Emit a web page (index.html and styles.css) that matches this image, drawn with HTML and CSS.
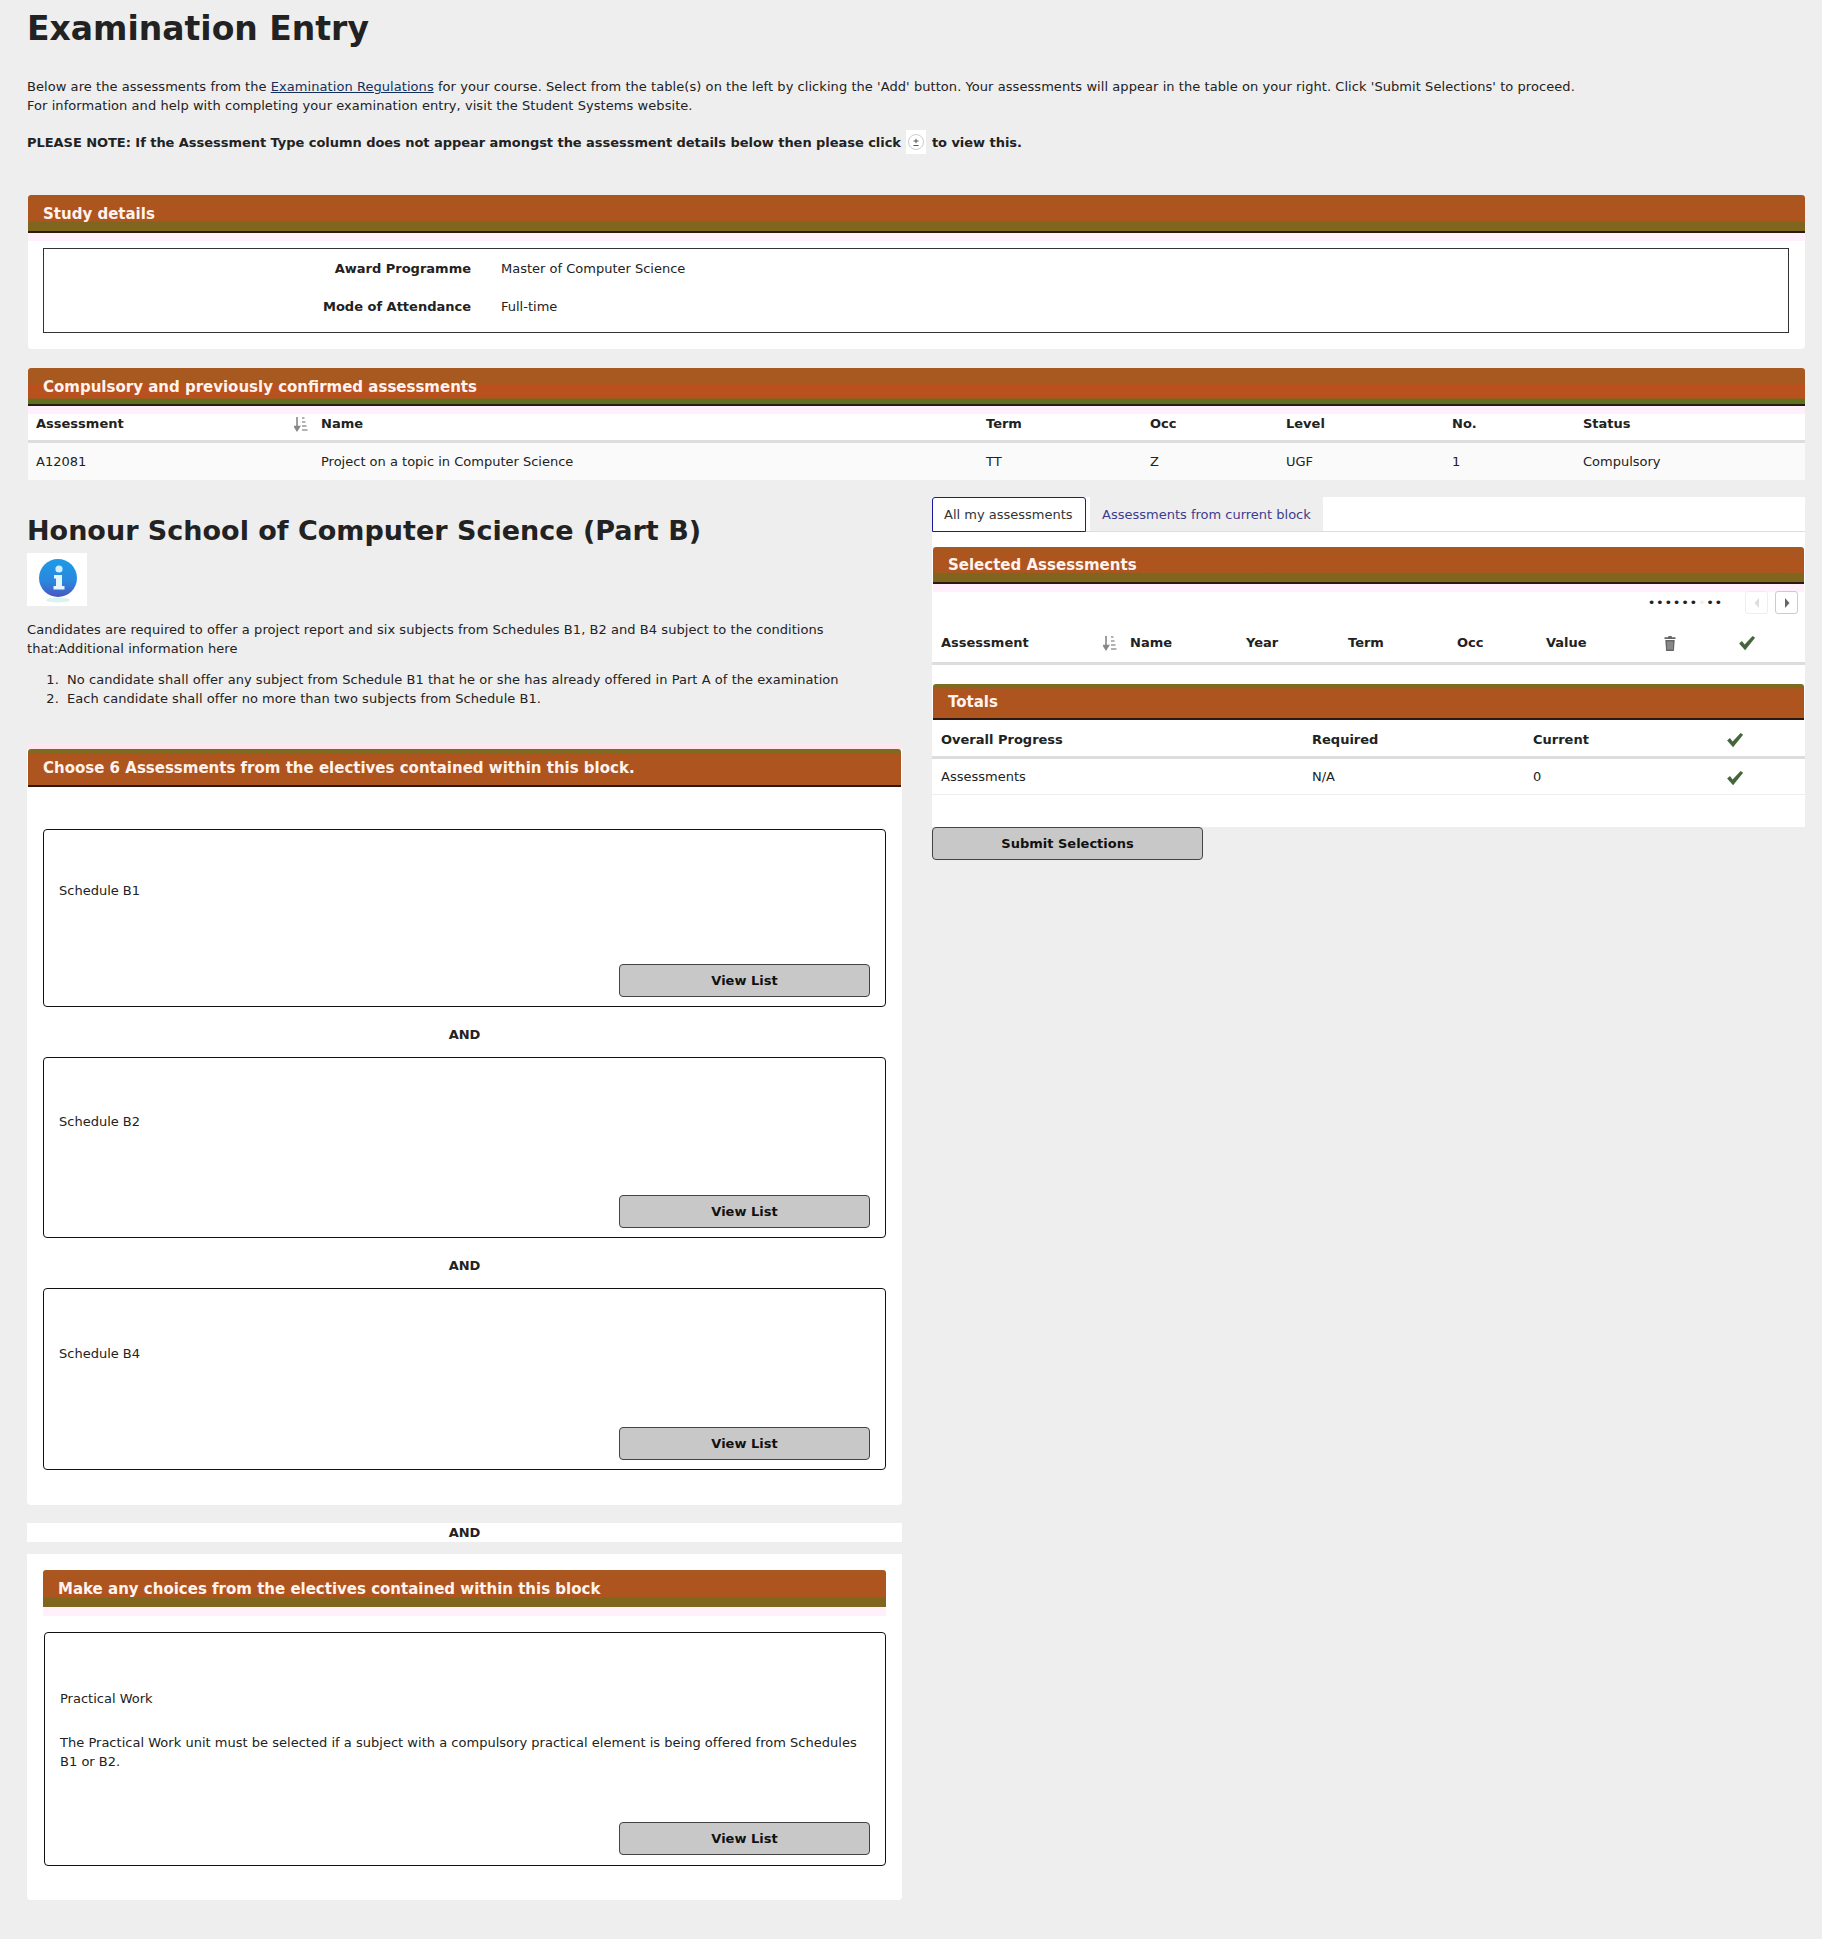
FILE: index.html
```html
<!DOCTYPE html>
<html lang="en">
<head>
<meta charset="utf-8">
<title>Examination Entry</title>
<link rel="stylesheet" href="styles.css">
</head>
<body>
<svg class="sprite" width="0" height="0" aria-hidden="true">
  <defs>
    <symbol id="sort" viewBox="0 0 14 16">
      <path d="M3 1v10M0.5 10.5L3 14.5l2.500-4z" fill="#888" stroke="#888" stroke-width="1.600"/>
      <path d="M8 2h2.500M8 6h3.500M8 10h4.500M8 14h5.500" stroke="#999" stroke-width="1.700" fill="none"/>
    </symbol>
    <symbol id="check" viewBox="0 0 16 16">
      <path d="M1 8.500l2.500-2.200 2.400 3L13 1.800l2.200 1.600L6.300 14.500z" fill="#44663a"/>
    </symbol>
    <symbol id="trash" viewBox="0 0 12 16">
      <path d="M4.500 0.500h3l.5 1.200h3.500v1.800H.5V1.700H4z" fill="#666"/>
      <path d="M1.300 4.500h9.400l-.8 11H2.100z" fill="#666"/>
      <path d="M4 6v8M6 6v8M8 6v8" stroke="#bbb" stroke-width=".8"/>
    </symbol>
  </defs>
</svg>

<div class="page">
  <h1 class="title">Examination Entry</h1>
  <p class="intro">Below are the assessments from the <a class="link" href="#">Examination Regulations</a> for your course. Select from the table(s) on the left by clicking the 'Add' button. Your assessments will appear in the table on your right. Click 'Submit Selections' to proceed.<br>For information and help with completing your examination entry, visit the Student Systems website.</p>
  <p class="note">PLEASE NOTE: If the Assessment Type column does not appear amongst the assessment details below then please click
    <span class="expander"><svg viewBox="0 0 20 24" width="20" height="24"><circle cx="10" cy="12" r="7.500" fill="#fff" stroke="#ccc"/><path d="M7.500 11h5M10 8.800v4.400M7.500 15.500h5" stroke="#555" stroke-width="1"/></svg></span>
    to view this.</p>

  <section class="panel panel--study">
    <h2 class="banner banner--low">Study details</h2>
    <div class="study-box">
      <div class="study-row"><span class="study-label">Award Programme</span><span>Master of Computer Science</span></div>
      <div class="study-row"><span class="study-label">Mode of Attendance</span><span>Full-time</span></div>
    </div>
  </section>

  <section class="panel panel--compulsory">
    <h2 class="banner banner--green">Compulsory and previously confirmed assessments</h2>
    <div class="row row--head cols-compulsory">
      <span class="cell-sort">Assessment<svg class="sort-icon"><use href="#sort"/></svg></span>
      <span>Name</span><span>Term</span><span>Occ</span><span>Level</span><span>No.</span><span>Status</span>
    </div>
    <div class="row row--body cols-compulsory">
      <span>A12081</span><span>Project on a topic in Computer Science</span><span>TT</span><span>Z</span><span>UGF</span><span>1</span><span>Compulsory</span>
    </div>
  </section>

  <div class="columns">
    <div class="col-left">
      <h2 class="school">Honour School of Computer Science (Part B)</h2>
      <div class="info-tile">
        <svg viewBox="0 0 60 53" width="60" height="53">
          <defs>
            <linearGradient id="infoBlue" x1="0" y1="0" x2="0" y2="1"><stop offset="0" stop-color="#1f9be6"/><stop offset=".6" stop-color="#2a86de"/><stop offset="1" stop-color="#4a55c0"/></linearGradient>
          </defs>
          <ellipse cx="31" cy="47" rx="12" ry="2.500" fill="#d9f3ee"/>
          <circle cx="31" cy="25" r="19" fill="url(#infoBlue)"/>
          <circle cx="32" cy="16" r="3.600" fill="#cfeffa"/>
          <path d="M27 22h8v11h2.500v3.500h-11V33H29v-7.500h-2z" fill="#e2f6fb"/>
        </svg>
      </div>
      <p class="lead">Candidates are required to offer a project report and six subjects from Schedules B1, B2 and B4 subject to the conditions that:Additional information here</p>
      <ol class="conditions">
        <li class="condition">No candidate shall offer any subject from Schedule B1 that he or she has already offered in Part A of the examination</li>
        <li class="condition">Each candidate shall offer no more than two subjects from Schedule B1.</li>
      </ol>

      <section class="panel panel--block">
        <h2 class="banner banner--top">Choose 6 Assessments from the electives contained within this block.</h2>
        <div class="pick pick--first">
          <p class="pick-name">Schedule B1</p>
          <div class="pick-actions"><button class="btn btn--list" type="button">View List</button></div>
        </div>
        <div class="and">AND</div>
        <div class="pick">
          <p class="pick-name">Schedule B2</p>
          <div class="pick-actions"><button class="btn btn--list" type="button">View List</button></div>
        </div>
        <div class="and">AND</div>
        <div class="pick pick--tall">
          <p class="pick-name">Schedule B4</p>
          <div class="pick-actions"><button class="btn btn--list" type="button">View List</button></div>
        </div>
      </section>

      <div class="and and--strip">AND</div>

      <section class="panel panel--practical">
        <h2 class="banner banner--low banner--flat">Make any choices from the electives contained within this block</h2>
        <div class="pick pick--practical">
          <p class="pick-name">Practical Work</p>
          <p class="pick-desc">The Practical Work unit must be selected if a subject with a compulsory practical element is being offered from Schedules B1 or B2.</p>
          <div class="pick-actions"><button class="btn btn--list" type="button">View List</button></div>
        </div>
      </section>
    </div>

    <div class="col-right">
      <div class="panel panel--selected">
        <nav class="tabs">
          <a class="tab tab--active" href="#">All my assessments</a>
          <a class="tab" href="#">Assessments from current block</a>
        </nav>
        <h2 class="banner banner--low banner--sel">Selected Assessments</h2>
        <div class="pager">
          <span class="dots">••••••<span class="dot-faint">•</span>••</span>
          <span class="page-btn page-btn--off"><svg viewBox="0 0 8 12" width="8" height="12"><path d="M6 1L1.500 6 6 11z" fill="#ddd"/></svg></span>
          <span class="page-btn"><svg viewBox="0 0 8 12" width="8" height="12"><path d="M2 1l4.500 5L2 11z" fill="#666"/></svg></span>
        </div>
        <div class="row row--sel cols-selected">
          <span class="cell-sort">Assessment<svg class="sort-icon"><use href="#sort"/></svg></span>
          <span>Name</span><span>Year</span><span>Term</span><span>Occ</span><span>Value</span>
          <span><svg class="trash-icon"><use href="#trash"/></svg></span>
          <span><svg class="check-icon"><use href="#check"/></svg></span>
        </div>
        <h2 class="banner banner--top banner--totals">Totals</h2>
        <div class="row row--tot cols-totals">
          <span>Overall Progress</span><span>Required</span><span>Current</span>
          <span><svg class="check-icon"><use href="#check"/></svg></span>
        </div>
        <div class="row row--totbody cols-totals">
          <span>Assessments</span><span>N/A</span><span>0</span>
          <span><svg class="check-icon"><use href="#check"/></svg></span>
        </div>
      </div>
      <button class="btn btn--submit" type="button">Submit Selections</button>
    </div>
  </div>
</div>
</body>
</html>
```

FILE: styles.css
```css
* { box-sizing: border-box; }

body {
  margin: 0;
  background: #eeeeee;
  color: #222;
  font-family: "DejaVu Sans", Verdana, sans-serif;
  font-size: 13px;
  line-height: 18.500px;
}

.sprite { position: absolute; }

.page {
  height: 1939px;
  padding: 0 17px 0 27px;
  overflow: hidden;
}

.title {
  margin: 0;
  padding-top: 10px;
  font-size: 33px;
  line-height: 38px;
  font-weight: 700;
}

.intro { margin: 30px 0 0; letter-spacing: 0.060px; }
.link { color: #14305a; }

.note {
  margin: 15px 0 0;
  font-weight: 700;
  height: 24px;
  line-height: 18px;
  letter-spacing: -0.045px;
}

.expander {
  display: inline-block;
  width: 20px;
  height: 24px;
  background: #fff;
  vertical-align: -7px;
  margin: 0 1px;
}
.expander svg { display: block; }

.panel { background: #fff; border-radius: 0 0 4px 4px; }

.banner {
  margin: 0;
  height: 38px;
  padding: 2px 15px 0;
  display: flex;
  align-items: center;
  color: #fff3ee;
  font-size: 15px;
  font-weight: 700;
  border-bottom: 2px solid #2a1a10;
  border-radius: 3px 3px 0 0;
  background: #ae541f;
  box-shadow: 0 8px 0 #fff0fb;
}
.banner--low { background: linear-gradient(#a8581f 0, #ae541f 35%, #ae541f 72%, #80651f 76%, #80651f 100%); }
.banner--green { background: linear-gradient(#a7591f 0, #a7591f 42%, #b8511e 46%, #b8511e 84%, #5f701f 86%, #5f701f 100%); box-shadow: 0 8px 0 #fff0fb; }
.banner--top { background: linear-gradient(#806a1f 0, #806a1f 11%, #ae541f 14%, #ae541f 100%); }
.banner--flat { border-bottom: 0; height: 37px; margin: 0 16px; padding: 2px 15px 0; box-shadow: 0 9px 0 #fff0fb; }
.banner--sel { margin: 15px 1px 0; height: 37px; }
.banner--totals { margin: 0 1px; height: 36px; box-shadow: none; }

/* Study details */
.panel--study { margin: 41px 0 0 1px; padding-bottom: 17px; height: 154px; }

.study-box {
  margin: 15px 16px 0 15px;
  height: 85px;
  border: 1px solid #333;
  padding-top: 11px;
}

.study-row {
  display: grid;
  grid-template-columns: 427px 1fr;
  column-gap: 30px;
  margin-bottom: 19px;
}
.study-label { text-align: right; font-weight: 700; }

/* Compulsory */
.panel--compulsory { margin: 19px 0 0 1px; height: 112px; }

.row { display: grid; align-items: center; }

.cols-compulsory { grid-template-columns: 285px 665px 164px 136px 166px 131px 1fr; padding-left: 8px; }
.cols-selected { grid-template-columns: 189px 116px 102px 109px 89px 118px 74px 1fr; padding-left: 9px; }
.cols-totals { grid-template-columns: 371px 221px 193px 1fr; padding-left: 9px; }

.row--head {
  height: 37px;
  padding-top: 2px;
  font-weight: 700;
  border-bottom: 3px solid #ddd;
}
.row--body { height: 37px; padding-top: 2px; background: #fafafa; }

.cell-sort { display: flex; justify-content: space-between; padding-right: 13px; align-items: center; }
.sort-icon { width: 14px; height: 16px; }
.check-icon { width: 18px; height: 18px; display: block; }
.trash-icon { width: 12px; height: 17px; display: block; }

/* Columns */
.columns {
  display: grid;
  grid-template-columns: 875px 873px;
  column-gap: 30px;
  margin-top: 17px;
  align-items: start;
}

.school {
  margin: 0;
  padding: 15px 0 0 0;
  font-size: 27px;
  line-height: 38px;
  font-weight: 700;
}

.info-tile {
  margin-top: 3px;
  width: 60px;
  height: 53px;
  background: #fff;
}
.info-tile svg { display: block; }

.lead { margin: 15px 30px 0 0; letter-spacing: 0.060px; }

.conditions {
  margin: 13px 0 0;
  padding-left: 36px;
  letter-spacing: 0.050px;
}
.condition { padding-left: 4px; }

.panel--block { margin-top: 41px; padding-bottom: 34px; height: 756px; }
.panel--block > .banner { margin: 0 1px; border-radius: 3px 3px 0 0; box-shadow: 0 -6px 0 #ffe6ef; }

.pick {
  margin: 0 16px;
  border: 1px solid #111;
  border-radius: 4px;
  background: #fff;
  padding: 55px 15px 9px 15px;
}
.pick--first { margin-top: 42px; padding-top: 52px; }
.pick--tall { padding-top: 56px; }
.pick-name { margin: 0; height: 18px; line-height: 18px; }
.pick-actions { display: flex; justify-content: flex-end; margin-top: 64px; }

.and {
  height: 50px;
  padding-top: 19px;
  text-align: center;
  font-weight: 700;
  line-height: 18px;
}

.and--strip {
  height: 19px;
  margin-top: 18px;
  padding-top: 1px;
  background: #fff;
}

.panel--practical {
  margin-top: 12px;
  padding: 16px 0 34px;
  height: 346px;
}

.pick--practical {
  margin: 25px 16px 0 17px;
  padding: 57px 15px 11px 15px;
  height: 234px;
}
.pick-desc { margin: 26px 0 0; letter-spacing: 0.020px; }
.pick--practical .pick-actions { margin-top: 51px; }

.btn {
  font-family: inherit;
  font-size: 13px;
  font-weight: 700;
  color: #111;
  background: #c8c8c8;
  border: 1px solid #444;
  border-radius: 4px;
  cursor: pointer;
  padding: 0;
}
.btn--list { width: 251px; height: 33px; }
.btn--submit { display: block; width: 271px; height: 33px; }

/* Right column */
.panel--selected { height: 330px; border-radius: 0; }

.tabs {
  display: flex;
  gap: 4px;
  height: 35px;
  border-bottom: 1px solid #ddd;
}

.tab {
  display: flex;
  align-items: center;
  padding: 2px 12px 0;
  color: #3c3c90;
  background: #eee;
  text-decoration: none;
  height: 34px;
}
.tab--active {
  width: 154px;
  height: 35px;
  color: #333;
  background: #fff;
  border: 1px solid #1a1a9a;
  border-radius: 3px 3px 0 0;
  padding: 2px 11px 0;
}

.pager {
  display: flex;
  justify-content: flex-end;
  align-items: center;
  gap: 7px;
  margin-top: 7px;
  padding-right: 7px;
  height: 23px;
}

.dots {
  margin-right: 15px;
  font-size: 13px;
  letter-spacing: 0.700px;
  color: #222;
  position: relative;
  top: 1px;
}
.dot-faint { color: #eee; }

.page-btn {
  width: 23px;
  height: 23px;
  display: flex;
  align-items: center;
  justify-content: center;
  border: 1px solid #ccc;
  border-radius: 3px;
}
.page-btn--off { border-color: #eee; }

.row--sel {
  height: 51px;
  padding-top: 10px;
  font-weight: 700;
  border-bottom: 3px solid #ddd;
  margin-bottom: 19px;
}

.row--tot {
  height: 39px;
  font-weight: 700;
  border-bottom: 3px solid #ddd;
  padding-top: 4px;
}
.row--totbody { height: 36px; padding-top: 2px; border-bottom: 1px solid #eee; }
```
